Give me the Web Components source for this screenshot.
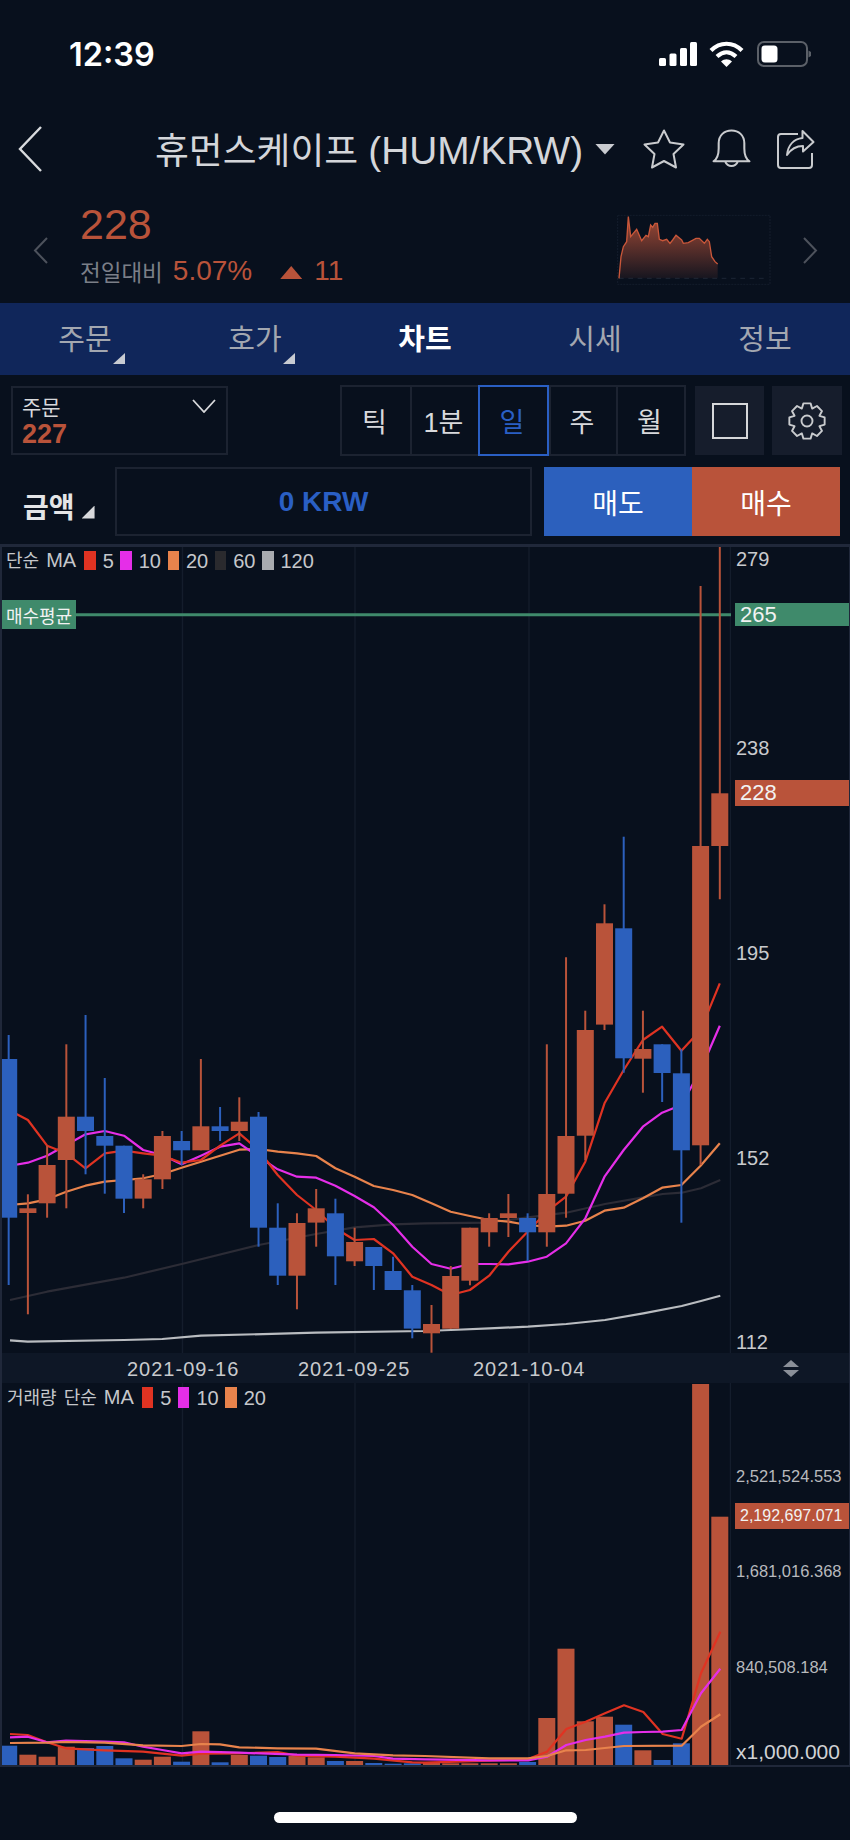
<!DOCTYPE html>
<html lang="ko">
<head>
<meta charset="utf-8">
<title>HUM/KRW</title>
<style>
    html, body {
        margin: 0;
        background: #08101d;
        font-family: "Liberation Sans", "Noto Sans CJK KR", sans-serif;
    }
    body { width: 850px; height: 1840px; overflow: hidden; }
</style>
</head>
<body>
<status-bar></status-bar>
<nav-header></nav-header>
<price-strip></price-strip>
<tab-bar></tab-bar>
<chart-toolbar></chart-toolbar>
<order-row></order-row>
<stock-chart></stock-chart>
<home-bar></home-bar>

<script>
const RED = '#b9533a';
const BLUE = '#2c60bd';
const MA5 = '#e03322';
const MA10 = '#e52ee8';
const MA20 = '#e8834c';
const MA60 = '#2c2c36';
const MA120 = '#b9bcc0';
const GRID = '#141d2c';

// x of candle i in crop units (3 units = 1px)
const slot = i => 26 + 57.66 * i;

// [colour, wick top, body top, body bottom, wick bottom], y in crop units from y=980
const CANDLES = [
    ['b', 165, 237, 713, 915], ['r', 643, 685, 699, 1003], ['r', 497, 555, 670, 713], ['r', 193, 410, 540, 685],
    ['b', 105, 410, 453, 583], ['b', 294, 468, 497, 641], ['b', 497, 497, 656, 699], ['r', 583, 598, 656, 685],
    ['r', 453, 468, 598, 627], ['b', 453, 483, 511, 555], ['r', 237, 439, 511, 511], ['b', 381, 439, 453, 483],
    ['r', 352, 425, 453, 483], ['b', 396, 410, 743, 800], ['b', 670, 743, 887, 915], ['r', 700, 729, 887, 988],
    ['r', 627, 685, 728, 800], ['b', 656, 700, 829, 915], ['r', 743, 786, 844, 858], ['b', 801, 801, 858, 930],
    ['b', 830, 873, 930, 930], ['b', 915, 931, 1046, 1075], ['r', 975, 1032, 1060, 1118], ['r', 858, 888, 1046, 1046],
    ['r', 743, 743, 902, 916], ['r', 700, 714, 757, 800], ['r', 642, 700, 714, 771], ['b', 700, 714, 757, 843],
    ['r', 193, 642, 757, 800], ['r', -68, 468, 641, 713], ['r', 92, 150, 467, 540], ['r', -227, -170, 134, 150],
    ['b', -430, -155, 235, 278], ['r', 92, 207, 236, 338], ['b', 193, 193, 279, 366], ['b', 208, 280, 511, 728],
    ['r', -1182, -402, 496, 555], ['r', -1299, -560, -402, -242]
];

const PRICE_MA5 = [390, 420, 497, 520, 565, 520, 512, 520, 527, 548, 540, 497, 460, 510, 585, 645, 690, 745, 780, 777, 820, 890, 915, 945, 930, 887, 815, 755, 695, 650, 545, 370, 270, 180, 140, 212, 150, 10];
const PRICE_MA10 = [558, 548, 527, 495, 463, 453, 467, 510, 525, 553, 527, 500, 490, 530, 568, 590, 593, 617, 648, 682, 735, 800, 852, 866, 852, 852, 853, 845, 830, 790, 715, 590, 510, 440, 398, 375, 270, 137];
const PRICE_MA20 = [675, 670, 658, 635, 617, 605, 600, 595, 582, 563, 545, 527, 509, 507, 515, 520, 528, 565, 590, 618, 630, 645, 670, 695, 708, 720, 725, 735, 740, 737, 722, 692, 683, 655, 623, 615, 557, 490];
// free points: [x, y] in crop units, right half shifted by 1275
const PRICE_MA60 = [[30, 960], [141, 935], [372, 893], [545, 852], [776, 795], [948, 762], [1064, 742], [1179, 733], [1275, 730], [1468, 728], [1584, 712], [1699, 698], [1815, 672], [1930, 652], [1988, 642], [2045, 638], [2103, 625], [2161, 600]];
const PRICE_MA120 = [[30, 1081], [83, 1085], [372, 1080], [487, 1077], [603, 1067], [948, 1058], [1275, 1053], [1353, 1050], [1468, 1045], [1584, 1040], [1699, 1032], [1815, 1020], [1930, 1000], [2045, 978], [2103, 963], [2161, 947]];

// volume bar tops, y in crop units from y=1380, baseline at 1155
const VOLUMES = [1097, 1124, 1130, 1100, 1104, 1098, 1135, 1139, 1130, 1145, 1054, 1147, 1125, 1127, 1131, 1128, 1132, 1143, 1143, 1149, 1151, 1150, 1148, 1150, 1150, 1150, 1150, 1146, 1014, 806, 1024, 1010, 1034, 1111, 1140, 1090, 12, 410];
const VOL_MA5 = [[30, 1062], [83, 1065], [141, 1087], [198, 1105], [314, 1111], [429, 1115], [545, 1127], [603, 1121], [718, 1120], [833, 1116], [891, 1127], [1006, 1130], [1122, 1136], [1237, 1147], [1275, 1148], [1468, 1142], [1584, 1137], [1641, 1115], [1699, 1047], [1757, 1025], [1815, 1000], [1872, 976], [1930, 996], [1988, 1062], [2045, 1076], [2103, 880], [2161, 755]];
const VOL_MA10 = [[30, 1072], [83, 1070], [141, 1087], [198, 1082], [314, 1085], [372, 1087], [429, 1100], [487, 1110], [545, 1120], [603, 1115], [718, 1118], [891, 1124], [1006, 1125], [1122, 1128], [1179, 1136], [1275, 1138], [1468, 1141], [1584, 1141], [1641, 1130], [1699, 1095], [1757, 1080], [1815, 1070], [1872, 1058], [1930, 1056], [1988, 1055], [2045, 1050], [2103, 940], [2161, 866]];
const VOL_MA20 = [[30, 1089], [141, 1088], [198, 1086], [314, 1088], [429, 1096], [545, 1098], [603, 1092], [660, 1093], [718, 1102], [833, 1105], [948, 1106], [1064, 1120], [1179, 1126], [1275, 1128], [1468, 1135], [1584, 1135], [1641, 1128], [1699, 1111], [1757, 1110], [1872, 1098], [2045, 1097], [2103, 1040], [2161, 1003]];

const polyline = (pts, base, color, width) =>
    `<polyline fill="none" stroke="${color}" stroke-width="${width}" stroke-linejoin="round" points="${pts.map(p => `${(p[0] / 3).toFixed(1)},${(base + p[1] / 3).toFixed(1)}`).join(' ')}"/>`;
const bySlot = ys => ys.map((y, i) => [slot(i), y]);
const gridLines = (top, bottom) => [182.5, 355, 529, 730.5].map(x =>
    `<line x1="${x}" x2="${x}" y1="${top}" y2="${bottom}" stroke="${GRID}" stroke-width="1.4"/>`).join('');

class StatusBar extends HTMLElement {
    constructor() {
        super();
        this.attachShadow({ mode: 'open' });
        this.shadowRoot.innerHTML = `
            <style>
                :host { display: flex; align-items: center; height: 108px; box-sizing: border-box; padding: 0 39px 0 69px; color: #fff; }
                .time { font: 600 32.5px Inter, sans-serif; flex: 1; }
                svg { display: block; }
            </style>
            <span class="time">12:39</span>
            <svg width="38" height="24" viewBox="0 0 38 24" fill="#fff">
                <rect x="0" y="16" width="7" height="8" rx="1.5"/>
                <rect x="10.5" y="11.5" width="7" height="12.5" rx="1.5"/>
                <rect x="21" y="6" width="7" height="18" rx="1.5"/>
                <rect x="31" y="0" width="7" height="24" rx="1.5"/>
            </svg>
            <svg width="35" height="26" viewBox="0 0 35 26" style="margin-left:12px">
                <path d="M2 9.5C11 .5 24 .5 33 9.5" fill="none" stroke="#fff" stroke-width="4.2"/>
                <path d="M8 15.5C14 10 21 10 27 15.5" fill="none" stroke="#fff" stroke-width="4.2"/>
                <path d="M12 20.5C15.5 17.5 19.5 17.5 23 20.5L17.5 26Z" fill="#fff"/>
            </svg>
            <svg width="54" height="26" viewBox="0 0 54 26" style="margin-left:13px">
                <rect x="1" y="1" width="49" height="24" rx="6" fill="none" stroke="#5b6068" stroke-width="2"/>
                <rect x="4.5" y="4.5" width="16" height="17" rx="3.5" fill="#fff"/>
                <path d="M51.5 9.5L54 11V15L51.5 16.5Z" fill="#5b6068"/>
            </svg>
        `;
    }
}

class NavHeader extends HTMLElement {
    constructor() {
        super();
        this.attachShadow({ mode: 'open' });
        this.shadowRoot.innerHTML = `
            <style>
                :host { display: flex; align-items: center; height: 82px; padding-left: 18px; color: #d4d6da; }
                svg { display: block; flex: none; }
                .title { margin: -2px 0 0 113px; font-size: 36.8px; white-space: nowrap; width: 428px; }
                .title span { font-size: 38.8px; }
                .caret { width: 20px; height: 11px; margin-left: 12px; background: #c9cbd0; clip-path: polygon(0 0, 100% 0, 50% 100%); }
            </style>
            <svg width="24" height="46" viewBox="0 0 24 46" fill="none" stroke="#d8dadd" stroke-width="2.4">
                <path d="M23 1L2 23L23 45"/>
            </svg>
            <div class="title">휴먼스케이프 <span>(HUM/KRW)</span></div>
            <div class="caret"></div>
            <svg width="42" height="40" viewBox="0 0 42 40" style="margin-left:28px" fill="none" stroke="#c9cbce" stroke-width="2" stroke-linejoin="round">
                <path d="M21 1.5L27 13.5L40.5 15.5L30.5 25L33 38.5L21 32L9 38.5L11.5 25L1.5 15.5L15 13.5Z"/>
            </svg>
            <svg width="39" height="40" viewBox="0 0 38 39" style="margin-left:27px" fill="none" stroke="#c9cbce" stroke-width="2" stroke-linejoin="round">
                <path d="M1.5 31.5C6 28.5 6.5 24 6.5 19V14C6.5 6 12 1.5 19 1.5S31.5 6 31.5 14V19C31.5 24 32 28.5 36.5 31.5Z"/>
                <path d="M13 32A6.5 6.5 0 0 0 25 32"/>
            </svg>
            <svg width="40" height="41" viewBox="0 -3 38 41" style="margin-left:24px" fill="none" stroke="#c9cbce" stroke-width="2" stroke-linejoin="round">
                <path d="M22 2H5A3 3 0 0 0 2 5V33A3 3 0 0 0 5 36H33A3 3 0 0 0 36 33V21"/>
                <path d="M26.5 -1L37.5 10L27 19.5V14C20 14 15 17 11 23C12 13 18 7 26.5 6Z"/>
            </svg>
        `;
    }
}

class PriceStrip extends HTMLElement {
    constructor() {
        super();
        this.attachShadow({ mode: 'open' });
        const spark = [[27, 205], [33, 140], [40, 110], [50, 95], [55, 20], [62, 80], [80, 58], [95, 92], [108, 76], [115, 80], [122, 45], [128, 52], [135, 40], [142, 40], [148, 88], [158, 92], [170, 88], [180, 100], [188, 90], [198, 76], [215, 90], [220, 100], [235, 98], [258, 85], [268, 85], [283, 100], [292, 88], [298, 95], [305, 140], [315, 155], [323, 162]];
        const line = spark.map(p => p.join(',')).join(' ');
        this.shadowRoot.innerHTML = `
            <style>
                :host { display: flex; align-items: center; height: 113px; box-sizing: border-box; padding: 7px 32px 0 33px; }
                svg { display: block; flex: none; }
                .quote { align-self: flex-start; margin: 5px 0 0 32px; color: ${RED}; }
                .last { font-size: 43px; line-height: 44px; }
                .change { display: flex; align-items: center; height: 30px; margin-top: 10px; font-size: 28px; }
                .label { color: #7b7f88; font-size: 22.5px; margin-right: 10px; }
                .up { width: 22px; height: 13px; margin: 3px 12px 0 28px; background: ${RED}; clip-path: polygon(50% 0, 100% 100%, 0 100%); }
                .spark { margin-left: auto; }
            </style>
            <svg width="15" height="27" viewBox="0 0 15 27" fill="none" stroke="#4d525c" stroke-width="2"><path d="M14 1L2 13.5L14 26"/></svg>
            <div class="quote">
                <div class="last">228</div>
                <div class="change"><span class="label">전일대비</span><span>5.07%</span><span class="up"></span><span>11</span></div>
            </div>
            <svg class="spark" width="170" height="80" viewBox="0 0 510 240">
                <defs><linearGradient id="fade" x1="0" y1="0" x2="0" y2="1">
                    <stop offset="0" stop-color="#b9533a" stop-opacity=".85"/>
                    <stop offset="1" stop-color="#b9533a" stop-opacity=".08"/>
                </linearGradient></defs>
                <rect x="23" y="16" width="457" height="207" fill="none" stroke="#141d2c" stroke-width="3" stroke-dasharray="6 3"/>
                <line x1="27" x2="462" y1="205" y2="205" stroke="#1c2635" stroke-width="3" stroke-dasharray="14 14"/>
                <polygon points="${line} 323,205" fill="url(#fade)"/>
                <polyline points="${line}" fill="none" stroke="#c9573a" stroke-width="4"/>
            </svg>
            <svg width="15" height="27" viewBox="0 0 15 27" style="margin-left:23px" fill="none" stroke="#4d525c" stroke-width="2"><path d="M1 1L13 13.5L1 26"/></svg>
        `;
    }
}

class TabBar extends HTMLElement {
    constructor() {
        super();
        this.attachShadow({ mode: 'open' });
        const tabs = [['주문', true], ['호가', true], ['차트', false], ['시세', false], ['정보', false]];
        this.shadowRoot.innerHTML = `
            <style>
                :host { display: grid; grid-template-columns: repeat(5, 170px); height: 72px; background: #10265a; }
                .tab { position: relative; display: flex; align-items: center; justify-content: center; color: #a3a7b0; font-size: 29px; padding-bottom: 4px; box-sizing: border-box; }
                .on { color: #fff; font-weight: 700; }
                .corner { position: absolute; left: 113px; bottom: 11px; width: 12px; height: 11px; background: #c8cbd2; clip-path: polygon(100% 0, 100% 100%, 0 100%); }
            </style>
            ${tabs.map(([name, more]) => `<div class="tab ${name === '차트' ? 'on' : ''}">${name}${more ? '<i class="corner"></i>' : ''}</div>`).join('')}
        `;
    }
}

class ChartToolbar extends HTMLElement {
    constructor() {
        super();
        this.attachShadow({ mode: 'open' });
        const cells = [['틱', 68], ['1분', 68], ['일', 71], ['주', 67], ['월', 68]];
        this.shadowRoot.innerHTML = `
            <style>
                :host { display: flex; align-items: center; height: 92px; box-sizing: border-box; padding: 10px 8px 11px 11px; color: #d8d9dc; }
                .order { position: relative; width: 217px; height: 69px; box-sizing: border-box; border: 2px solid #1c2331; padding: 7px 0 0 9px; }
                .order b { display: block; color: ${RED}; font-size: 27px; line-height: 28px; }
                .order span { display: block; font-size: 21px; line-height: 25px; }
                .order svg { position: absolute; left: 179px; top: 11px; }
                .periods { display: flex; height: 71px; margin-left: auto; border: 2px solid #1c2331; box-sizing: border-box; }
                .periods div { display: flex; align-items: center; justify-content: center; box-sizing: border-box; font-size: 27px; border-left: 2px solid #1c2331; margin-top: -2px; margin-bottom: -2px; padding-right: 3px; }
                .periods div:first-child { border-left: 0; }
                .periods .on { border: 2px solid #2a5fc4; color: #2a5fc4; }
                .tool { display: flex; align-items: center; justify-content: center; width: 69px; height: 69px; margin-left: 9px; background: #161d2c; }
                .tool + .tool { width: 70px; margin-left: 8px; }
            </style>
            <div class="order">
                <span>주문</span><b>227</b>
                <svg width="24" height="14" viewBox="0 0 24 14" fill="none" stroke="#d8d9dc" stroke-width="1.8"><path d="M1 1L12 13L23 1"/></svg>
            </div>
            <div class="periods">
                ${cells.map(([t, w]) => `<div class="${t === '일' ? 'on' : ''}" style="width:${w}px">${t}</div>`).join('')}
            </div>
            <div class="tool"><svg width="36" height="36" viewBox="0 0 36 36"><rect x="1" y="1" width="34" height="34" fill="none" stroke="#d6d7da" stroke-width="2"/></svg></div>
            <div class="tool"><svg width="40" height="40" viewBox="-20 -20 40 40" fill="none" stroke="#c9cbce" stroke-width="1.9" stroke-linejoin="round"><path d="${this.gearPath()}"/><circle r="5.5"/></svg></div>
        `;
    }

    // 8 teeth, one pointing straight up
    gearPath() {
        let d = '';
        for (let i = 0; i < 8; i++) {
            const a = i * Math.PI / 4 - Math.PI / 2;
            [[13.5, -.39], [18, -.2], [18, .2], [13.5, .39]].forEach(([r, da], k) => {
                const x = (r * Math.cos(a + da)).toFixed(2);
                const y = (r * Math.sin(a + da)).toFixed(2);
                d += (i === 0 && k === 0 ? 'M' : 'L') + x + ' ' + y;
            });
        }
        return d + 'Z';
    }
}

class OrderRow extends HTMLElement {
    constructor() {
        super();
        this.attachShadow({ mode: 'open' });
        this.shadowRoot.innerHTML = `
            <style>
                :host { display: flex; height: 69px; margin-bottom: 8px; padding-left: 23px; }
                .label { display: flex; align-items: center; width: 92px; padding-top: 8px; box-sizing: border-box; color: #e4e5e7; font-size: 28px; font-weight: 700; }
                .label i { width: 13px; height: 13px; margin: 13px 0 0 7px; background: #d8d9dc; clip-path: polygon(100% 0, 100% 100%, 0 100%); }
                .amount { display: flex; align-items: center; justify-content: center; width: 417px; box-sizing: border-box; border: 2px solid #1c2331; color: #2a5fc4; font-size: 28px; font-weight: 700; }
                .btn { display: flex; align-items: center; justify-content: center; width: 148px; color: #fff; font-size: 28px; }
                .sell { margin-left: 12px; background: ${BLUE}; }
                .buy { background: ${RED}; }
            </style>
            <div class="label">금액<i></i></div>
            <div class="amount">0 KRW</div>
            <div class="btn sell">매도</div>
            <div class="btn buy">매수</div>
        `;
    }
}

class MaLegend extends HTMLElement {
    constructor() {
        super();
        this.attachShadow({ mode: 'open' });
        const items = (this.getAttribute('items') || '').split(',').map(s => s.split(':'));
        this.shadowRoot.innerHTML = `
            <style>
                :host { display: flex; align-items: center; color: #c5c7cb; font-size: 18px; line-height: 22px; white-space: nowrap; }
                .label { margin-right: 8px; word-spacing: 2px; }
                .label span, .num { font-size: 20px; }
                i { width: 11.5px; height: ${this.getAttribute('swatch') || 19}px; margin-right: 7px; }
                .num { margin-right: 6.5px; }
            </style>
            <span class="label">${this.getAttribute('label')} <span>MA</span></span>
            ${items.map(([n, c]) => `<i style="background:${c}"></i><span class="num">${n}</span>`).join('')}
        `;
    }
}

class AxisTag extends HTMLElement {
    constructor() {
        super();
        this.attachShadow({ mode: 'open' });
        this.shadowRoot.innerHTML = `
            <style>
                :host { position: absolute; left: 4px; right: 0; display: flex; align-items: center; padding-left: 5px; color: #f2f2f2; }
            </style>
            <slot></slot>
        `;
    }
}

class CandlePanel extends HTMLElement {
    constructor() {
        super();
        this.attachShadow({ mode: 'open' });
        const candles = CANDLES.map((c, i) => {
            const color = c[0] === 'r' ? RED : BLUE;
            const x = slot(i) / 3;
            const y = v => (980 + v / 3).toFixed(1);
            return `<line x1="${x}" x2="${x}" y1="${y(c[1])}" y2="${y(c[4])}" stroke="${color}" stroke-width="2"/>` +
                `<rect x="${(x - 8.5).toFixed(1)}" y="${y(c[2])}" width="17" height="${((c[3] - c[2]) / 3).toFixed(1)}" fill="${color}"/>`;
        }).join('');
        const ticks = [['279', 559], ['238', 748], ['195', 953], ['152', 1158], ['112', 1342]];
        this.shadowRoot.innerHTML = `
            <style>
                :host { position: relative; display: flex; height: 806px; }
                svg { display: block; flex: none; }
                .axis { position: relative; flex: 1; color: #c8cacd; font-size: 20px; }
                .tick { position: absolute; left: 5px; line-height: 24px; }
                .legend { position: absolute; left: 4px; top: 2px; }
                .avg { position: absolute; left: 0; top: 53px; width: 74px; height: 29px; display: flex; align-items: center; justify-content: center; background: #3f8a6b; color: #f2f2f2; font-size: 18px; }
                axis-tag { font-size: 22px; }
            </style>
            <svg width="729" height="806" viewBox="2 547 729 806">
                ${gridLines(547, 1353)}
                <line x1="70" x2="731" y1="614.7" y2="614.7" stroke="#3f8a6b" stroke-width="3"/>
                ${polyline(PRICE_MA120, 980, MA120, 2.2)}
                ${polyline(PRICE_MA60, 980, MA60, 2.2)}
                ${polyline(bySlot(PRICE_MA20), 980, MA20, 2.2)}
                ${polyline(bySlot(PRICE_MA10), 980, MA10, 2.2)}
                ${polyline(bySlot(PRICE_MA5), 980, MA5, 2.2)}
                ${candles}
            </svg>
            <div class="axis">
                ${ticks.map(([t, y]) => `<div class="tick" style="top:${y - 547 - 12}px">${t}</div>`).join('')}
                <axis-tag style="top:56px;height:23px;background:#3f8a6b">265</axis-tag>
                <axis-tag style="top:233px;height:26px;background:${RED}">228</axis-tag>
            </div>
            <ma-legend class="legend" label="단순" items="5:${MA5},10:${MA10},20:${MA20},60:#2a2a2e,120:#a8abb0"></ma-legend>
            <div class="avg">매수평균</div>
        `;
    }
}

class DateStrip extends HTMLElement {
    constructor() {
        super();
        this.attachShadow({ mode: 'open' });
        const dates = [['2021-09-16', 125], ['2021-09-25', 296], ['2021-10-04', 471]];
        this.shadowRoot.innerHTML = `
            <style>
                :host { position: relative; display: block; height: 30px; background: #0e1726; color: #c8cacd; font-size: 20px; letter-spacing: 1px; }
                span { position: absolute; top: 4px; line-height: 24px; }
                i { position: absolute; left: 781px; width: 16px; height: 7px; background: #8b9099; }
                .up { top: 7px; clip-path: polygon(50% 0, 100% 100%, 0 100%); }
                .down { top: 17px; clip-path: polygon(0 0, 100% 0, 50% 100%); }
            </style>
            ${dates.map(([d, x]) => `<span style="left:${x}px">${d}</span>`).join('')}
            <i class="up"></i><i class="down"></i>
        `;
    }
}

class VolumePanel extends HTMLElement {
    constructor() {
        super();
        this.attachShadow({ mode: 'open' });
        const bars = VOLUMES.map((top, i) => {
            const color = CANDLES[i][0] === 'r' ? RED : BLUE;
            const y = 1380 + top / 3;
            return `<rect x="${(slot(i) / 3 - 8.5).toFixed(1)}" y="${y.toFixed(1)}" width="17" height="${(1765 - y).toFixed(1)}" fill="${color}"/>`;
        }).join('');
        const ticks = [['2,521,524.553', 1476], ['1,681,016.368', 1571], ['840,508.184', 1667]];
        this.shadowRoot.innerHTML = `
            <style>
                :host { position: relative; display: flex; height: 382px; }
                svg { display: block; flex: none; }
                .axis { position: relative; flex: 1; color: #b8babe; font-size: 16.5px; }
                .tick { position: absolute; left: 5px; line-height: 20px; white-space: nowrap; }
                .unit { font-size: 21px; color: #d0d2d5; }
                .legend { position: absolute; left: 5px; top: 3px; }
                axis-tag { font-size: 16px; white-space: nowrap; }
            </style>
            <svg width="729" height="382" viewBox="2 1383 729 382">
                ${gridLines(1383, 1765)}
                ${bars}
                ${polyline(VOL_MA5, 1380, MA5, 2.2)}
                ${polyline(VOL_MA10, 1380, MA10, 2.2)}
                ${polyline(VOL_MA20, 1380, MA20, 2.2)}
            </svg>
            <div class="axis">
                ${ticks.map(([t, y]) => `<div class="tick" style="top:${y - 1383 - 10}px">${t}</div>`).join('')}
                <div class="tick unit" style="top:${1752 - 1383 - 10}px">x1,000.000</div>
                <axis-tag style="top:120px;height:26px;background:${RED}">2,192,697.071</axis-tag>
            </div>
            <ma-legend class="legend" label="거래량 단순" swatch="21" items="5:${MA5},10:${MA10},20:${MA20}"></ma-legend>
        `;
    }
}

class StockChart extends HTMLElement {
    constructor() {
        super();
        this.attachShadow({ mode: 'open' });
        this.shadowRoot.innerHTML = `
            <style>
                :host { display: block; box-sizing: border-box; height: 1223px; border: solid #20283a; border-width: 3px 1px 2px 2px; overflow: hidden; }
            </style>
            <candle-panel></candle-panel>
            <date-strip></date-strip>
            <volume-panel></volume-panel>
        `;
    }
}

class HomeBar extends HTMLElement {
    constructor() {
        super();
        this.attachShadow({ mode: 'open' });
        this.shadowRoot.innerHTML = `
            <style>
                :host { display: flex; justify-content: center; padding-top: 45px; }
                div { width: 303px; height: 11px; border-radius: 6px; background: #fff; }
            </style>
            <div></div>
        `;
    }
}

customElements.define('status-bar', StatusBar);
customElements.define('nav-header', NavHeader);
customElements.define('price-strip', PriceStrip);
customElements.define('tab-bar', TabBar);
customElements.define('chart-toolbar', ChartToolbar);
customElements.define('order-row', OrderRow);
customElements.define('ma-legend', MaLegend);
customElements.define('axis-tag', AxisTag);
customElements.define('candle-panel', CandlePanel);
customElements.define('date-strip', DateStrip);
customElements.define('volume-panel', VolumePanel);
customElements.define('stock-chart', StockChart);
customElements.define('home-bar', HomeBar);
</script>
</body>
</html>
